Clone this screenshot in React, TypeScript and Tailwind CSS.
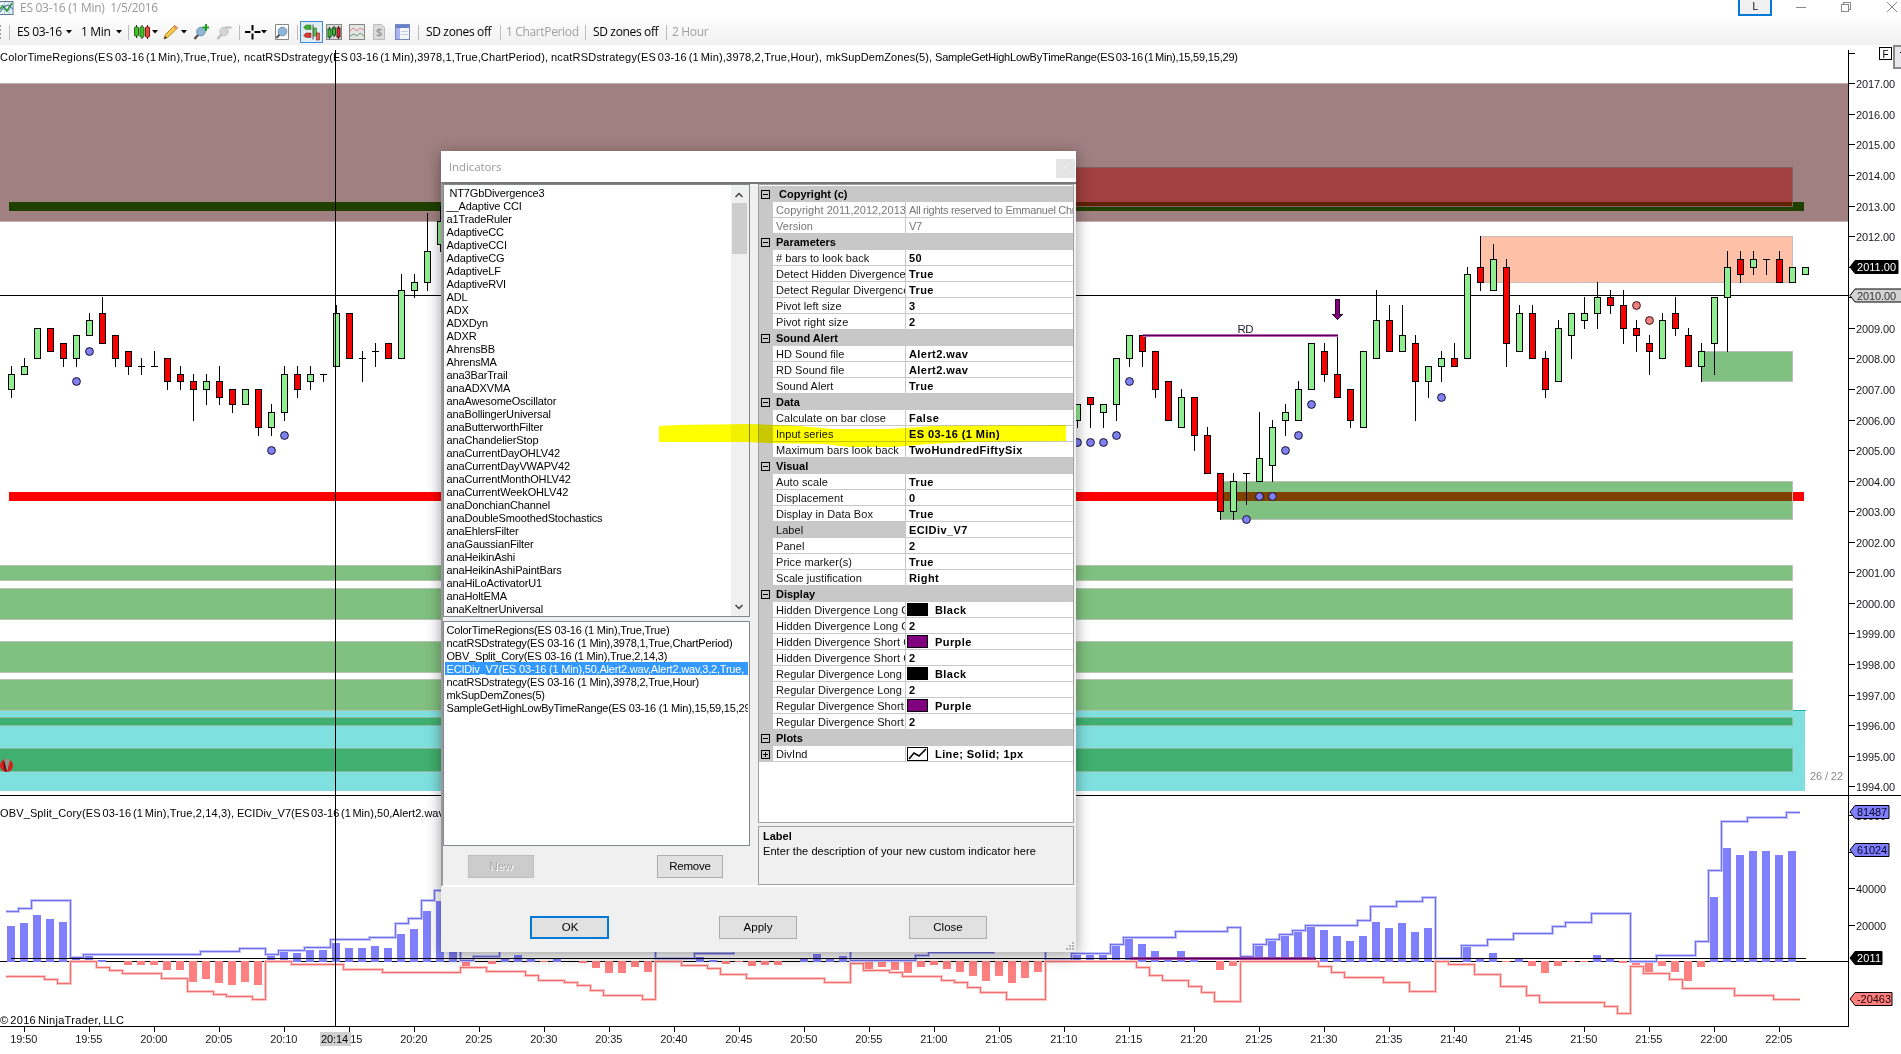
import { ChevronDown, ChevronUp } from "lucide-react";
import type { ReactNode } from "react";

// open, high, low, close (points above 2000), keyed by bar index
const leftCandles = [
  [7, 7.75, 6.75, 7.5], [7.5, 8, 7.5, 7.75], [8, 9, 8, 9], [9, 9, 8.25, 8.25], [8.5, 8.5, 7.75, 8],
  [8, 8.75, 7.75, 8.75], [8.75, 9.5, 8.75, 9.25], [9.5, 10, 8.5, 8.5], [8.75, 8.75, 7.75, 8], [8.25, 8.25, 7.5, 7.75],
  [7.75, 8, 7.5, 7.75], [7.75, 8.25, 7.75, 7.75], [8, 8, 7, 7.25], [7.5, 7.75, 7, 7.25], [7.25, 7.5, 6, 7],
  [7, 7.5, 6.5, 7.25], [7.25, 7.75, 6.5, 6.75], [7, 7, 6.25, 6.5], [6.5, 7, 6.5, 7], [7, 7, 5.5, 5.75],
  [5.75, 6.5, 5.5, 6.25], [6.25, 7.75, 6, 7.5], [7.5, 7.75, 6.75, 7], [7.25, 7.75, 7, 7.5], [7.5, 7.5, 7.25, 7.5],
  [7.75, 9.75, 7.75, 9.5], [9.5, 9.5, 8, 8], [8, 8.25, 7.25, 8], [8.25, 8.5, 7.75, 8.25], [8.5, 8.5, 8, 8],
  [8, 10.75, 8, 10.25], [10.25, 10.75, 10, 10.5], [10.5, 12.75, 10.25, 11.5], [11.75, 13, 11.5, 12.5],
];

const rightCandles = [
  [6, 6.5, 5.75, 6.5], [6.75, 6.75, 5.75, 6.5], [6.25, 6.5, 5.75, 6.5], [6.5, 8, 6, 8], [8, 8.75, 7.75, 8.75],
  [8.75, 8.75, 7.75, 8.25], [8.25, 8.25, 6.75, 7], [7.25, 7.25, 6, 6], [5.75, 7, 5.75, 6.75], [6.75, 6.75, 5, 5.5],
  [5.5, 5.75, 4.25, 4.25], [4.25, 4.25, 2.75, 3], [3, 4.25, 2.75, 4], [4.25, 4.25, 3.25, 4.25], [4, 6.25, 4, 4.75],
  [4.5, 6, 4, 5.75], [6, 6.5, 5.5, 6.25], [6, 7.25, 6, 7], [7, 8.5, 7, 8.5], [8.25, 8.5, 7.25, 7.5],
  [7.5, 8.75, 6.75, 6.75], [7, 7, 5.75, 6], [5.75, 8.25, 5.75, 8.25], [8, 10.25, 8, 9.25], [9.25, 9.75, 8.25, 8.25],
  [8.25, 9.75, 8.25, 8.75], [8.5, 8.75, 6, 7.25], [7.25, 7.75, 6.75, 7.75], [7.75, 8.25, 7.25, 8], [8, 8.5, 7.75, 7.75],
  [8, 11, 8, 10.75], [11, 12, 10.25, 10.5], [10.25, 11.75, 10.25, 11.25], [11, 11.25, 7.75, 8.5], [8.25, 9.75, 8.25, 9.5],
  [9.5, 9.75, 8, 8], [8, 8.25, 6.75, 7], [7.25, 9.25, 7.25, 9], [8.75, 9.5, 8, 9.5], [9.25, 10, 9, 9.5],
  [9.5, 10.5, 9, 10], [10, 10.25, 9.5, 9.75], [9.75, 10.25, 8.5, 9], [9, 9.25, 8.25, 8.75], [8.5, 8.75, 7.5, 8.25],
  [8, 9.5, 8, 9.25], [9.5, 10, 8.75, 9], [8.75, 9, 7.75, 7.75], [7.75, 8.5, 7.25, 8.25], [8.5, 10, 7.5, 10],
  [10, 11.5, 8.25, 11], [11.25, 11.5, 10.5, 10.75], [11, 11.5, 10.75, 11.25], [11.25, 11.25, 10.75, 11.25],
  [11.25, 11.5, 10.5, 10.5], [10.5, 11, 10.5, 11], [10.75, 11, 10.75, 11],
];

const candles = [
  ...leftCandles.map((c, i) => ({ i, c })),
  ...rightCandles.map((c, i) => ({ i: i + 82, c })),
];

const blueDots = [
  [5, 7.25], [6, 8.25], [20, 5], [21, 5.5], [82, 5.25], [83, 5.25], [84, 5.25], [85, 5.5], [86, 7.25],
  [95, 2.75], [96, 3.5], [97, 3.5], [98, 5], [99, 5.5], [100, 6.5], [110, 6.75],
];
const redDots = [[125, 9.75], [126, 9.25]];

// OBV histogram, pixels above / below the zero line
const volume = [
  36, 39, 47, 43, 40, 4, 7, 2, 0, -4, -4, -4, -9, -9, -21, -18, -22, -24, -21, -24,
  7, 11, 9, 12, 12, 19, 14, 14, 16, 14, 28, 33, 51, 61, 30, -6, 0, -3, 3, 7,
  3, -1, 3, 0, -2, -7, -12, -12, -6, -11, 2, 2, 0, 5, 2, -3, -1, -5, -4, -4,
  0, 4, 8, 4, 6, -3, -9, -6, -9, -12, -6, -4, -8, -11, -15, -20, -15, -22, -17, -11,
  0, 3, 8, 8, 8, 17, 24, 18, 11, 5, 11, 5, 0, -9, -5, 5, 17, 22, 27, 31,
  36, 32, 26, 21, 26, 40, 34, 39, 30, 34, 2, 0, 15, 3, 9, -1, 4, -5, -12, -5,
  -1, -1, 7, 3, -2, -5, -12, -5, -11, -20, -6, 65, 114, 107, 111, 111, 107, 111,
];

const blueSteps = [
  [0, 50], [1, 53], [2, 61], [5, 4], [6, 7], [15, 10], [18, 13], [20, 7], [21, 11], [23, 14], [25, 22], [28, 24],
  [30, 38], [31, 43], [32, 61], [33, 71], [35, 1], [36, 5], [38, 12], [50, 3], [53, 8], [56, 12], [65, 1],
  [70, 6], [71, 9], [76, 12], [80, 1], [82, 8], [85, 17], [86, 24], [90, 30], [94, 34], [95, 5], [96, 17],
  [97, 22], [98, 27], [99, 31], [100, 36], [104, 41], [105, 55], [107, 60], [109, 64], [110, 3], [112, 16],
  [114, 22], [116, 28], [119, 35], [120, 39], [122, 48], [125, 0], [127, 6], [130, 20], [131, 91], [132, 140],
  [134, 144], [137, 149],
];
const redSteps = [
  [0, -15], [3, -18], [4, -22], [5, 0], [7, -6], [8, -9], [9, -12], [12, -17], [14, -30], [16, -33], [17, -35],
  [19, -38], [20, 0], [22, -3], [26, -8], [29, -11], [35, -6], [37, -10], [40, -14], [41, -19], [43, -21],
  [44, -24], [45, -29], [46, -34], [49, -38], [50, 0], [52, -4], [54, -7], [55, -13], [57, -17], [63, -21],
  [65, -2], [66, -9], [68, -11], [69, -15], [72, -19], [73, -21], [74, -26], [75, -31], [77, -38], [80, 0],
  [87, -6], [88, -14], [89, -19], [91, -25], [92, -31], [93, -40], [95, 0], [101, -5], [102, -11], [103, -16],
  [106, -21], [108, -30], [110, 0], [111, -3], [113, -13], [115, -25], [117, -34], [118, -41], [123, -45],
  [124, -52], [125, -5], [126, -12], [128, -18], [129, -27], [133, -34], [136, -38],
];

// panel captions: x, y, width, text
const captions: [number, number, number, string][] = [
  [0, 61, 240, "ColorTimeRegions(ES 03-16 (1 Min),True,True),"],
  [244, 61, 304, "ncatRSDstrategy(ES 03-16 (1 Min),3978,1,True,ChartPeriod),"],
  [551, 61, 271, "ncatRSDstrategy(ES 03-16 (1 Min),3978,2,True,Hour),"],
  [826, 61, 106, "mkSupDemZones(5),"],
  [935, 61, 303, "SampleGetHighLowByTimeRange(ES 03-16 (1 Min),15,59,15,29)"],
  [0, 817, 234, "OBV_Split_Cory(ES 03-16 (1 Min),True,2,14,3),"],
  [237, 817, 207, "ECIDiv_V7(ES 03-16 (1 Min),50,Alert2.wav"],
  [0, 1024, 124, "© 2016 NinjaTrader, LLC"],
];

const ZERO = 961;
const barX = (i: number) => 11 + 13 * i;
const priceY = (p: number) => Math.floor(83.8 + (17 - p) * 30.565);

function stepPath(steps: number[][]) {
  let d = `M6 ${ZERO + 0.5 - steps[0][1]}`;
  steps.slice(1).forEach(([i, v]) => {
    d += `H${5.5 + 13 * i}V${ZERO + 0.5 - v}`;
  });
  return d + "H1800";
}

const indicators = [
  " NT7GbDivergence3", "__Adaptive CCI", "a1TradeRuler", "AdaptiveCC", "AdaptiveCCI", "AdaptiveCG", "AdaptiveLF",
  "AdaptiveRVI", "ADL", "ADX", "ADXDyn", "ADXR", "AhrensBB", "AhrensMA", "ana3BarTrail", "anaADXVMA",
  "anaAwesomeOscillator", "anaBollingerUniversal", "anaButterworthFilter", "anaChandelierStop",
  "anaCurrentDayOHLV42", "anaCurrentDayVWAPV42", "anaCurrentMonthOHLV42", "anaCurrentWeekOHLV42",
  "anaDonchianChannel", "anaDoubleSmoothedStochastics", "anaEhlersFilter", "anaGaussianFilter", "anaHeikinAshi",
  "anaHeikinAshiPaintBars", "anaHiLoActivatorU1", "anaHoltEMA", "anaKeltnerUniversal",
];

const applied = [
  "ColorTimeRegions(ES 03-16 (1 Min),True,True)",
  "ncatRSDstrategy(ES 03-16 (1 Min),3978,1,True,ChartPeriod)",
  "OBV_Split_Cory(ES 03-16 (1 Min),True,2,14,3)",
  "ECIDiv_V7(ES 03-16 (1 Min),50,Alert2.wav,Alert2.wav,3,2,True,",
  "ncatRSDstrategy(ES 03-16 (1 Min),3978,2,True,Hour)",
  "mkSupDemZones(5)",
  "SampleGetHighLowByTimeRange(ES 03-16 (1 Min),15,59,15,29)",
];

type Prop = { name: string; value: string; muted?: boolean; active?: boolean; icon?: "black" | "purple" | "line" };

const groups: { title: string; rows: Prop[] }[] = [
  {
    title: " Copyright (c)",
    rows: [
      { name: "Copyright 2011,2012,2013", value: "All rights reserved to Emmanuel Chri", muted: true },
      { name: "Version", value: "V7", muted: true },
    ],
  },
  {
    title: "Parameters",
    rows: [
      { name: "# bars to look back", value: "50" },
      { name: "Detect Hidden Divergence", value: "True" },
      { name: "Detect Regular Divergence", value: "True" },
      { name: "Pivot left size", value: "3" },
      { name: "Pivot right size", value: "2" },
    ],
  },
  {
    title: "Sound Alert",
    rows: [
      { name: "HD Sound file", value: "Alert2.wav" },
      { name: "RD Sound file", value: "Alert2.wav" },
      { name: "Sound Alert", value: "True" },
    ],
  },
  {
    title: "Data",
    rows: [
      { name: "Calculate on bar close", value: "False" },
      { name: "Input series", value: "ES 03-16 (1 Min)" },
      { name: "Maximum bars look back", value: "TwoHundredFiftySix" },
    ],
  },
  {
    title: "Visual",
    rows: [
      { name: "Auto scale", value: "True" },
      { name: "Displacement", value: "0" },
      { name: "Display in Data Box", value: "True" },
      { name: "Label", value: "ECIDiv_V7", active: true },
      { name: "Panel", value: "2" },
      { name: "Price marker(s)", value: "True" },
      { name: "Scale justification", value: "Right" },
    ],
  },
  {
    title: "Display",
    rows: [
      { name: "Hidden Divergence Long Color", value: "Black", icon: "black" },
      { name: "Hidden Divergence Long Count", value: "2" },
      { name: "Hidden Divergence Short Color", value: "Purple", icon: "purple" },
      { name: "Hidden Divergence Short Count", value: "2" },
      { name: "Regular Divergence Long", value: "Black", icon: "black" },
      { name: "Regular Divergence Long", value: "2" },
      { name: "Regular Divergence Short", value: "Purple", icon: "purple" },
      { name: "Regular Divergence Short", value: "2" },
    ],
  },
  { title: "Plots", rows: [{ name: "DivInd", value: "Line; Solid; 1px", icon: "line" }] },
];

function Candle({ i, c }: { i: number; c: number[] }) {
  const [open, high, low, close] = c;
  const x = barX(i);
  const top = priceY(Math.max(open, close));
  const bottom = priceY(Math.min(open, close));
  return (
    <g stroke="#000">
      <path d={`M${x + 0.5} ${priceY(high)}V${priceY(low) + 1}`} />
      {open === close ? (
        <path d={`M${x - 3} ${top + 0.5}h7`} />
      ) : (
        <rect x={x - 2.5} y={top + 0.5} width={6} height={bottom - top} fill={close > open ? "#90ee90" : "#f80000"} />
      )}
    </g>
  );
}

function PriceTag(props: { y: number; w: number; fill: string; color: string; text: string; tw: number }) {
  const { y, w, fill, color, text, tw } = props;
  return (
    <g>
      <path d={`M1850 ${y}l5 -6.5h${w - 5}v13h-${w - 5}z`} fill={fill} stroke="#000" />
      <text x={1857} y={y + 4} fill={color} textLength={tw}>{text}</text>
    </g>
  );
}

function Chart() {
  const times = Array.from({ length: 28 }, (_, k) => {
    const m = 19 * 60 + 50 + k * 5;
    return `${Math.floor(m / 60)}:${String(m % 60).padStart(2, "0")}`;
  });
  const prices = Array.from({ length: 24 }, (_, k) => 17 - k);

  return (
    <svg
      width={1901}
      height={1009}
      viewBox="0 45 1901 1009"
      className="block bg-white font-['Liberation_Sans',Arial,sans-serif] text-[11px]"
    >
      <g shapeRendering="crispEdges">
        <rect x={0} y={84} width={1848} height={137} fill="#a08080" />
        <path d="M0 83.5H1848M0 221.5H1848" stroke="#c0b0b0" />
        <rect x={9} y={202} width={1795} height={9} fill="#204000" />
        <rect x={600} y={167.5} width={1192.5} height={39} fill="#a04040" stroke="#806060" />
        <rect x={600} y={202} width={1192} height={4} fill="#602000" />

        <rect x={9} y={492} width={1795} height={9} fill="#f00" />
        <rect x={1220.5} y={481.5} width={572} height={38} fill="#80c080" stroke="#b8c0b8" />
        <rect x={1221} y={492} width={571} height={9} fill="#804000" />
        <rect x={1480.5} y={236.5} width={312} height={46} fill="#ffc0a8" stroke="#c8bcb8" />
        <rect x={1701.5} y={351.5} width={91} height={30} fill="#80c080" stroke="#b8c0b8" />

        <rect x={0} y={711} width={1805} height={80} fill="#80e0e0" />
        <path d="M1793 710.5H1806" stroke="#20b2aa" />
        {[[565, 15], [588, 31], [641, 31], [679, 31]].map(([y, h]) => (
          <rect key={y} x={-1} y={y + 0.5} width={1793.5} height={h} fill="#80c080" stroke="#b8c4b4" />
        ))}
        {[[717, 8], [748, 23]].map(([y, h]) => (
          <rect key={y} x={-1} y={y + 0.5} width={1793.5} height={h} fill="#40b070" stroke="#90b8a0" />
        ))}
      </g>

      <g shapeRendering="crispEdges">
        <path d="M0 295.5H1848" stroke="#000" />
        {candles.map((c) => <Candle key={c.i} {...c} />)}
        <path d="M1143 335.5H1338" stroke="#c060c0" strokeWidth={3} />
        <path d="M1143 335.5H1338" stroke="#500050" />
        <path d="M1335.5 299.5h4v15h3l-5 5l-5 -5h3z" fill="#800080" stroke="#300030" />
      </g>
      <text x={1237.5} y={333} fontSize={11.5} textLength={16} fill="#223">RD</text>

      {blueDots.map(([i, p]) => (
        <circle key={`${i}`} cx={barX(i) + 0.5} cy={priceY(p) + 0.5} r={3.9} fill="#8080f0" stroke="#101030" />
      ))}
      {redDots.map(([i, p]) => (
        <circle key={`${i}`} cx={barX(i) + 0.5} cy={priceY(p) + 0.5} r={3.9} fill="#f08080" stroke="#301010" />
      ))}

      <g shapeRendering="crispEdges" fill="none">
        <path d={`M0 ${ZERO + 0.5}H1849`} stroke="#000" />
        {volume.map((v, i) => (
          <rect
            key={i}
            x={barX(i) - 4}
            y={v > 0 ? ZERO + 1 - v : ZERO}
            width={8}
            height={Math.abs(v)}
            fill={v > 0 ? "#8080ff" : "#ff8080"}
          />
        ))}
        <path d={stepPath(blueSteps)} stroke="#c4c4ff" strokeWidth={3} />
        <path d={stepPath(blueSteps)} stroke="#7070e8" />
        <path d={stepPath(redSteps)} stroke="#ffc4c4" strokeWidth={3} />
        <path d={stepPath(redSteps)} stroke="#f07070" />
        <path d="M11 958.5H1806" stroke="#000" />
        <path d="M1130 958.5H1316" stroke="#a040a0" strokeWidth={3} />
        <path d="M1130 958.5H1316" stroke="#500050" />
      </g>

      <g stroke="#000" shapeRendering="crispEdges">
        <path d="M335.5 50V1026M0 795.5H1901M1848.5 50V1027M0 1026.5H1849M1848 53.5h7" />
        {prices.map((p) => <path key={p} d={`M1849 ${priceY(p) + 0.5}h6`} />)}
        <path d="M1849 815.5h6M1849 852.5h6M1849 888.5h6M1849 925.5h6" />
        {times.map((t, k) => <path key={t} d={`M${24.5 + 65 * k} 1027v5`} />)}
      </g>

      <g fill="#181820">
        {prices.map((p) => (
          <text key={p} x={1856} y={priceY(p) + 4.5} textLength={39}>{`${2000 + p}.00`}</text>
        ))}
        <text x={1856} y={819.5} textLength={30}>80000</text>
        <text x={1856} y={892.5} textLength={30}>40000</text>
        <text x={1856} y={929.5} textLength={30}>20000</text>
        {times.map((t, k) => (
          <text key={t} x={10.3 + 65 * k} y={1043} textLength={27}>{t}</text>
        ))}
      </g>
      <rect x={320} y={1032} width={31} height={14} fill="#d0d0d0" />
      <text x={321} y={1043} textLength={27}>20:14</text>

      <PriceTag y={267} w={48} fill="#000" color="#fff" text="2011.00" tw={39} />
      <PriceTag y={295.5} w={56} fill="#d3d3d3" color="#333" text="2010.00" tw={39} />
      <PriceTag y={812} w={39} fill="#8080ff" color="#002" text="81487" tw={30} />
      <PriceTag y={850} w={39} fill="#8080ff" color="#002" text="61024" tw={30} />
      <PriceTag y={958} w={32} fill="#000" color="#fff" text="2011" tw={24} />
      <PriceTag y={999} w={42} fill="#ff8080" color="#200" text="-20463" tw={34} />

      {captions.map(([x, y, w, text]) => (
        <text key={text} x={x} y={y} textLength={w} className="[word-spacing:-1.5px]">{text}</text>
      ))}
      <text x={1810} y={780} fill="#888" textLength={33}>26 / 22</text>

      <circle cx={6.5} cy={765.5} r={6.5} fill="#d42020" />
      <path d="M4 760l3 12l3 -12q-3 -2 -6 0z" fill="#8a9a8a" />
      <path d="M4 760l3 12l-2 -1q-2 -5 -1 -11z" fill="#511" />

      <rect x={1879.5} y={47.5} width={12} height={12} fill="#fff" stroke="#000" />
      <text x={1882.5} y={57.5} fontSize={10}>F</text>
      <rect x={1894} y={46} width={12} height={22} fill="#e8e8ec" stroke="#888" strokeWidth={2} />
      <path d="M1900 52.5h1" stroke="#000" />
    </svg>
  );
}

function Caret({ className }: { className: string }) {
  return (
    <svg width="6" height="4" className={`shrink-0 ${className}`}>
      <path d="M0 0h6L3 3.5z" fill="#000" />
    </svg>
  );
}

function Separator({ className }: { className: string }) {
  return <div className={`h-[15px] w-px shrink-0 bg-[#bdbdbd] ${className}`} />;
}

function Icon({ className, children }: { className: string; children: ReactNode }) {
  return (
    <svg width="16" height="16" viewBox="0 0 16 16" className={`shrink-0 ${className}`}>
      {children}
    </svg>
  );
}

function Magnifier({ gray }: { gray?: boolean }) {
  return (
    <>
      <path d="M5.5 10.5L1.5 15" stroke={gray ? "#bbb" : "#555"} strokeWidth="2.4" />
      <circle cx="8" cy="7.5" r="4.3" fill={gray ? "#d4d4d4" : "#8fb6d8"} stroke={gray ? "#c4c4c4" : "#6f93b5"} />
    </>
  );
}

function TitleBar() {
  return (
    <div className="flex h-5 items-start bg-white text-[#999]">
      <svg width="14" height="14" viewBox="0 0 14 14" className="mt-px shrink-0">
        <rect x="-1" y="0.5" width="14" height="13" fill="#e8f0f8" stroke="#5a7896" />
        <path d="M0 4.5H13M0 8.5H13M4.5 1V13M9 1V13" stroke="#b8cce0" />
        <path d="M0 8l3 -3l4 5l5 -8" fill="none" stroke="#2f9a3a" strokeWidth="1.6" />
        <path d="M0 11l4 -5l4 -2l5 4" fill="none" stroke="#36619c" />
      </svg>
      <span className="ml-1.5 w-[137px] whitespace-pre text-[12px] leading-4 tracking-[-0.28px]">
        ES 03-16 (1 Min)  1/5/2016
      </span>
      <div className="ml-[1581px] flex h-[16px] w-[34px] justify-center border-2 border-t-0 border-[#0078d7] bg-[#f0f0f0] text-[11px] leading-[11px] text-black">
        L
      </div>
      <svg width="103" height="14" viewBox="0 0 103 14" className="ml-6" fill="none" stroke="#888" shapeRendering="crispEdges">
        <path d="M0 7.5h10" />
        <path d="M45.5 4.5h7v7h-7zM47.5 4V2.5h7v7H53" />
        <path d="M91 2l10 10M101 2l-10 10" shapeRendering="auto" />
      </svg>
    </div>
  );
}

function Toolbar() {
  return (
    <div className="flex h-[25px] items-center bg-gradient-to-b from-[#fdfdfd] to-[#f0f0f0] pb-px text-[12px] tracking-[-0.35px] text-black">
      <svg width="3" height="15" className="shrink-0">
        <path d="M0.5 0V15" stroke="#999" strokeDasharray="2 2" />
      </svg>
      <Separator className="ml-1.5" />
      <span className="ml-[7px] w-[46px] whitespace-nowrap">ES 03-16</span>
      <Caret className="ml-[3px]" />
      <span className="ml-[9px] w-8 whitespace-nowrap">1 Min</span>
      <Caret className="ml-[3px]" />
      <Separator className="ml-1.5" />
      <Icon className="ml-[5px]">
        <path d="M2.5 1v13M8 1v14M13.5 1v14" stroke="#222" />
        <rect x="0.5" y="3" width="4" height="9" rx="1" fill="#45c02c" stroke="#1d6a12" />
        <rect x="6" y="3" width="4" height="10" rx="1" fill="#45c02c" stroke="#1d6a12" />
        <rect x="11.5" y="3" width="4" height="10" rx="1" fill="#e04a3a" stroke="#8a1a10" />
      </Icon>
      <Caret className="ml-[2px]" />
      <Icon className="ml-[5px]">
        <path d="M1 15l1.5 -4.5L11.5 1.5l3 2.5L5 13.2z" fill="#f8cc4a" stroke="#b58420" />
        <path d="M1 15l1 -3l2 1.8z" fill="#333" />
        <path d="M11 2l3 2.6" stroke="#e08070" strokeWidth="2" />
      </Icon>
      <Caret className="ml-[2px]" />
      <Icon className="ml-[6px]">
        <Magnifier />
        <path d="M13 0v7M9.5 3.5h7" stroke="#1ea01e" strokeWidth="2" />
      </Icon>
      <Icon className="ml-[7px]">
        <Magnifier gray />
        <path d="M9.5 3.5h6" stroke="#bbb" strokeWidth="2" />
      </Icon>
      <Separator className="ml-[7px]" />
      <Icon className="ml-[5px]">
        <path d="M7.5 1v5.5M7.5 9.5v6M0 8h5.5M9.5 8h6" stroke="#000" strokeWidth="2" />
      </Icon>
      <Caret className="ml-0" />
      <Icon className="ml-[7px]">
        <path d="M1.5 0.5h13v15h-13z" fill="#fff" stroke="#888" />
        <path d="M5.5 10.5L2.5 14" stroke="#555" strokeWidth="2" />
        <circle cx="8.5" cy="7.5" r="4.3" fill="#8fb6d8" stroke="#6f93b5" />
      </Icon>
      <Separator className="ml-[7px]" />
      <div className="ml-[2px] flex h-[22px] w-[23px] shrink-0 items-center justify-center border border-[#3c8ad8] bg-[#e2ecf5]">
        <svg width="17" height="17" viewBox="0 0 17 17">
          <path d="M0.5 3.5l2.5 -2.5h5v4.5h-5z" fill="#3fae2e" stroke="#2a6a20" strokeWidth="0.5" />
          <path d="M0.5 11.5l2.5 -2.5h5v4.5h-5z" fill="#d83a2c" stroke="#7a2018" strokeWidth="0.5" />
          <path d="M10 0.5v15" stroke="#555" />
          <rect x="10.5" y="4" width="3" height="8" fill="#5cc04a" stroke="#2a6a20" strokeWidth="0.6" />
          <rect x="13.5" y="9" width="3" height="7" fill="#e06050" stroke="#7a2018" strokeWidth="0.6" />
        </svg>
      </div>
      <Icon className="ml-[3px]">
        <rect x="0.5" y="0.5" width="15" height="15" fill="#d8d8d8" stroke="#888" />
        <path d="M3.5 3v12M8 2v11M12.5 2v13" stroke="#222" />
        <rect x="2" y="5" width="3" height="8" fill="#45c02c" stroke="#152" />
        <rect x="6.5" y="4" width="3" height="7" fill="#45c02c" stroke="#152" />
        <rect x="11" y="4" width="3" height="9" fill="#d33" stroke="#511" />
      </Icon>
      <Icon className="ml-[7px]">
        <rect x="0.5" y="0.5" width="15" height="15" fill="#e4e4e4" stroke="#888" />
        <path d="M1 7l3 -3l4 3l3 -3l4 2" fill="none" stroke="#d88" />
        <path d="M1 12l4 -2l3 2l3 -3l4 3" fill="none" stroke="#5b9a6a" />
      </Icon>
      <Icon className="ml-[6px]">
        <path d="M2.5 0.5h8l3 3v12h-11z" fill="#dcdcdc" stroke="#bbb" />
        <text x="5" y="12" fontSize="11" fontWeight="700" fill="#999">$</text>
      </Icon>
      <Icon className="ml-[8px]">
        <rect x="0.5" y="0.5" width="14" height="15" fill="#f4f6ff" stroke="#7488c0" />
        <path d="M1 2.5h13" stroke="#6a80cc" strokeWidth="3" />
        <rect x="1" y="4" width="4" height="11" fill="#aab4f0" />
        <path d="M6 7.5h7M6 10.5h7" stroke="#ccd" />
      </Icon>
      <Separator className="ml-[7px]" />
      <span className="ml-[7px] w-[66px] whitespace-nowrap">SD zones off</span>
      <Separator className="ml-[8px]" />
      <span className="ml-[5px] w-[74px] whitespace-nowrap text-[#a0a0a0]">1 ChartPeriod</span>
      <Separator className="ml-[5px]" />
      <span className="ml-[7px] w-[66px] whitespace-nowrap">SD zones off</span>
      <Separator className="ml-[7px]" />
      <span className="ml-[5px] w-10 whitespace-nowrap text-[#a0a0a0]">2 Hour</span>
    </div>
  );
}

function ToggleBox({ plus }: { plus?: boolean }) {
  return (
    <svg width="9" height="9" className="ml-[2px] shrink-0" shapeRendering="crispEdges">
      <path d={plus ? "M0.5 0.5h8v8h-8zM2 4.5h5M4.5 2v5" : "M0.5 0.5h8v8h-8zM2 4.5h5"} fill="none" stroke="#000" />
    </svg>
  );
}

function PropIcon({ icon }: { icon: Prop["icon"] }) {
  if (icon === "line") {
    return (
      <svg width="21" height="14" className="-ml-[2px] mr-[7px] shrink-0">
        <rect x="0.5" y="0.5" width="20" height="13" fill="#fff" stroke="#000" />
        <path d="M2 12l5 -6l5 3l7 -7" fill="none" stroke="#000" strokeWidth="1.6" />
      </svg>
    );
  }
  return (
    <div
      className={`-ml-[2px] mr-[7px] h-[13px] w-[21px] shrink-0 border border-black ${
        icon === "purple" ? "bg-[#800080]" : "bg-black"
      }`}
    />
  );
}

function PropertyGrid() {
  return (
    <div className="h-[639px] w-[316px] shrink-0 overflow-hidden border border-[#a0a0a0] bg-white pt-px">
      {groups.map((group) => (
        <div key={group.title}>
          <div className="flex h-4 items-center bg-[#c8c8c8]">
            <ToggleBox />
            <span className="-mt-px ml-[6px] whitespace-pre font-bold leading-[14px]">{group.title}</span>
          </div>
          {group.rows.map((row, index) => (
            <div key={index} className="flex h-4">
              <div className="flex w-[14px] shrink-0 items-center bg-[#c8c8c8]">
                {row.icon === "line" && <ToggleBox plus />}
              </div>
              <div
                className={`w-[133px] shrink-0 overflow-hidden whitespace-nowrap border-b border-r border-[#c8c8c8] pl-[3px] leading-[16px] tracking-[0.05px] ${
                  row.muted ? "text-[#777]" : "text-[#111]"
                } ${row.active ? "bg-[#c8c8c8]" : ""}`}
              >
                {row.name}
              </div>
              <div
                className={`flex flex-1 items-center overflow-hidden whitespace-nowrap border-b border-[#c8c8c8] pl-[3px] leading-[16px] ${
                  row.muted ? "tracking-[-0.3px] text-[#777]" : "font-bold tracking-[0.42px] text-black"
                }`}
              >
                {row.icon && <PropIcon icon={row.icon} />}
                {row.value}
              </div>
            </div>
          ))}
        </div>
      ))}
    </div>
  );
}

function Button({ label, className }: { label: string; className: string }) {
  return (
    <button className={`flex h-[23px] items-center justify-center text-[11.5px] ${className}`}>{label}</button>
  );
}

function IndicatorsDialog() {
  return (
    <div className="absolute left-[441px] top-[151px] flex h-[801px] w-[635px] flex-col bg-[#f0f0f0] text-[11px] shadow-[0_3px_14px_rgba(0,0,0,0.4)]">
      <div className="flex h-[31px] items-center bg-white pl-2">
        <span className="flex-1 font-['Open_Sans',sans-serif] text-[11.5px] tracking-[-0.1px] text-[#999]">Indicators</span>
        <div className="mr-px mt-[3px] flex h-[19px] w-[19px] items-center justify-center bg-[#e4e4e4] text-[9px] text-[#f4f4f4]">×</div>
      </div>

      <div className="flex h-[705px] border-b-2 border-b-white border-l-2 border-l-[#9a9a9a] border-t-2 border-t-[#777]">
        <div className="flex w-[307px] flex-col">
          <div className="flex h-[433px] border border-[#828790] bg-white">
            <div className="flex-1 overflow-hidden pl-[2.5px] pt-px tracking-[-0.13px]">
              {indicators.map((name) => (
                <div key={name} className="h-[13px] whitespace-pre leading-[14px] text-black">{name}</div>
              ))}
            </div>
            <div className="flex w-[18px] flex-col items-center bg-[#f0f0f0] pr-[2px]">
              <ChevronUp className="mt-1 h-3 w-3 shrink-0 text-[#505050]" strokeWidth={3.5} />
              <div className="mt-[2px] h-[51px] w-[15px] bg-[#cdcdcd]" />
              <ChevronDown className="mb-[3px] mt-auto h-3 w-3 shrink-0 text-[#505050]" strokeWidth={3.5} />
            </div>
          </div>

          <div className="mt-1 h-[225px] overflow-hidden border border-[#828790] bg-white p-px tracking-[-0.2px]">
            {applied.map((name, index) => (
              <div
                key={name}
                className={`h-[13px] overflow-hidden whitespace-nowrap pl-[1.5px] leading-[14px] ${
                  index === 3 ? "bg-[#3399ff] text-white" : "text-black"
                }`}
              >
                {name}
              </div>
            ))}
          </div>

          <div className="mt-[9px] flex justify-between pl-[25px] pr-[27px]">
            <Button label="New" className="w-[66px] border border-[#bfbfbf] bg-[#cccccc] text-[#a8a8a8] [text-shadow:1px_1px_0_#fff]" />
            <Button label="Remove" className="w-[66px] border border-[#adadad] bg-[#e1e1e1] tracking-[-0.2px]" />
          </div>
        </div>

        <div className="ml-2 flex flex-col">
          <PropertyGrid />
          <div className="mt-[3px] h-[59px] w-[316px] shrink-0 border border-[#a0a0a0] pl-1 pt-[2px] leading-[15px]">
            <p className="font-bold">Label</p>
            <p className="tracking-[0.07px]">Enter the description of your new custom indicator here</p>
          </div>
        </div>
      </div>

      <div className="flex pt-[29px]">
        <Button label="OK" className="ml-[89px] w-[79px] border-2 border-[#0078d7] bg-[#e1e1e1] pl-px" />
        <Button label="Apply" className="ml-[110px] w-[78px] border border-[#adadad] bg-[#e1e1e1]" />
        <Button label="Close" className="ml-[112px] w-[78px] border border-[#adadad] bg-[#e1e1e1]" />
      </div>
      <svg width="8" height="8" className="absolute bottom-[2px] right-[2px]" fill="#b4b4b4">
        <path d="M6 0h2v2h-2zM6 3h2v2h-2zM3 3h2v2h-2zM6 6h2v2h-2zM3 6h2v2h-2zM0 6h2v2h-2z" />
      </svg>
    </div>
  );
}

export default function App() {
  return (
    <div className="relative h-[1054px] w-[1901px] overflow-hidden bg-white font-['Liberation_Sans',Arial,sans-serif]">
      <div className="font-['Open_Sans',sans-serif]">
        <TitleBar />
        <Toolbar />
      </div>
      <Chart />
      <IndicatorsDialog />
      {/* highlighter stroke over the input series row */}
      <svg width="408" height="26" viewBox="0 0 408 26" className="pointer-events-none absolute left-[659px] top-[423px] mix-blend-multiply">
        <path d="M0 3L20 2L90 1L140 3L175 6L230 6L275 3L407 2V18L310 19L270 21L235 24H190L165 21L110 20L85 19H0z" fill="#ff0" />
      </svg>
    </div>
  );
}
